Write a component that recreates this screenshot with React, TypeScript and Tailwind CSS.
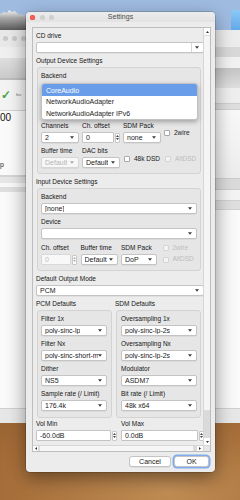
import React from 'react';

// Small down-pointing triangle used on every combo box.
const Caret = ({ muted = false }: { muted?: boolean }) => (
  <svg width="4" height="3" viewBox="0 0 4 3" className="shrink-0">
    <path d="M0 0.2h4L2 2.8z" fill={muted ? '#a8a8a8' : '#3b3b3b'} />
  </svg>
);

// A label that sits above a control.
const Label = ({ children, className = '' }: { children: React.ReactNode; className?: string }) => (
  <div className={`h-[8px] whitespace-nowrap text-[6.5px] leading-[8px] text-[#151515] ${className}`}>{children}</div>
);

interface ComboProps {
  text?: string;
  disabled?: boolean;
  editable?: boolean;
  className?: string;
}

const Combo: React.FC<ComboProps> = ({ text = '', disabled = false, editable = false, className = '' }) => (
  <div
    className={`flex h-[11px] shrink-0 items-center justify-between rounded-[2px] border pl-[3px] pr-[4px] text-[7px] leading-none shadow-[0_0.5px_0.5px_rgba(0,0,0,0.1)] ${
      disabled ? 'border-[#d6d6d6] bg-[#f7f7f7] text-[#b4b4b4]' : 'border-[#c4c4c4] bg-white text-[#1a1a1a]'
    } ${className}`}
  >
    <span className="overflow-hidden whitespace-nowrap">{text}</span>
    <div className="flex h-full items-center">
      {editable && <div className="mr-[3px] h-full w-px bg-[#d8d8d8]" />}
      <Caret muted={disabled} />
    </div>
  </div>
);

const Spin: React.FC<ComboProps> = ({ text = '', disabled = false, className = '' }) => (
  <div className={`flex h-[11px] shrink-0 items-center ${className}`}>
    <div
      className={`flex h-full flex-1 items-center overflow-hidden whitespace-nowrap rounded-[1px] border pl-[3px] text-[7px] leading-none ${
        disabled ? 'border-[#d8d8d8] bg-[#f8f8f8] text-[#c0c0c0]' : 'border-[#c4c4c4] bg-white text-[#1a1a1a]'
      }`}
    >
      {text}
    </div>
    <div className="ml-[1px] flex h-[10px] w-[5px] flex-col items-center justify-center gap-[1px] rounded-[1px] border border-[#c8c8c8] bg-white">
      <svg width="3" height="2" viewBox="0 0 3 2">
        <path d="M0 2h3L1.5 0z" fill={disabled ? '#b0b0b0' : '#444'} />
      </svg>
      <svg width="3" height="2" viewBox="0 0 3 2">
        <path d="M0 0h3L1.5 2z" fill={disabled ? '#b0b0b0' : '#444'} />
      </svg>
    </div>
  </div>
);

const Check = ({ label, disabled = false }: { label: string; disabled?: boolean }) => (
  <div className="flex items-center gap-[4px]">
    <span
      className={`h-[6px] w-[6px] shrink-0 rounded-[1px] border ${
        disabled ? 'border-[#d4d4d4] bg-[#f3f3f3]' : 'border-[#a8a8a8] bg-white'
      }`}
    />
    <span className={`whitespace-nowrap text-[6.5px] leading-none ${disabled ? 'text-[#bdbdbd]' : 'text-[#1a1a1a]'}`}>{label}</span>
  </div>
);

// Label + control stacked.
const Field = ({ label, children }: { label: string; children: React.ReactNode }) => (
  <div className="flex flex-col gap-[2px]">
    <Label>{label}</Label>
    {children}
  </div>
);

const groupBox = 'rounded-[3px] border border-[#d3d3d3] bg-[#e6e6e6]';

export default function App() {
  return (
    <div className="relative h-[500px] w-[240px] overflow-hidden bg-[#9fbbe0] font-['Liberation_Sans',Arial,sans-serif]">
      {/* DESKTOP: sky, mountain and the corner icon */}
      <svg className="absolute left-0 top-0" width="30" height="32" viewBox="0 0 30 32">
        <defs>
          <linearGradient id="mtn" x1="0" y1="0" x2="0" y2="1">
            <stop offset="0" stopColor="#f4f4f4" />
            <stop offset="0.35" stopColor="#a9a9a9" />
            <stop offset="1" stopColor="#4d4d4d" />
          </linearGradient>
        </defs>
        <path d="M0 14 L4 12 L7 13 L9 10 L12 12 L15 11 L18 14 L23 15 L30 17 L30 32 L0 32Z" fill="url(#mtn)" />
      </svg>
      <div className="absolute left-[231px] top-[10px] h-[22px] w-[12px] rounded-tl-[2px] bg-[linear-gradient(180deg,#8cc8f6,#5fa6e6)]" />

      {/* Left background window */}
      <div className="absolute left-0 top-[30px] flex h-[393px] w-[34px] flex-col bg-[#fafafa]">
        <div className="flex h-[17px] items-center gap-[4px] bg-[#e8e8e8] pl-[3px]">
          <span className="h-[5px] w-[5px] rounded-full bg-[#c9c9c9]" />
          <span className="h-[5px] w-[5px] rounded-full bg-[#c9c9c9]" />
          <span className="h-[5px] w-[5px] rounded-full bg-[#c9c9c9]" />
        </div>
        <div className="h-[11px] bg-[#efefef]" />
        <div className="h-[20px] bg-[linear-gradient(180deg,#dedede,#cacaca)]" />
        <div className="h-[2px] bg-[#bcbcbc]" />
        <div className="flex h-[30px] items-center gap-[5px] bg-[#f3f3f3] pl-[1px]">
          <span className="text-[12px] font-bold leading-none text-[#4aa23a]">✓</span>
          <span className="text-[4px] leading-none text-[#666]">Inv</span>
        </div>
        <div className="h-px bg-[#d2d2d2]" />
        <div className="pl-0 pt-[2px] text-[10px] leading-none text-[#111]">00</div>
        <div className="mt-[38px] text-[7px] leading-none text-[#222]">p</div>
        <div className="mt-[7px] h-[2px] bg-[#d4d4d4]" />
        <div className="h-[6px] bg-[#e6e6e6]" />
        <div className="h-[4px] bg-[#f8f8f8]" />
        <div className="h-[5px] bg-[#dedede]" />
        <div className="flex-1 bg-[linear-gradient(90deg,#fbfbfb,#efefef)]" />
        <div className="h-px bg-[#cfcfcf]" />
        <div className="h-[14px] bg-[#e7e7e7]" />
      </div>

      {/* Right background window */}
      <div className="absolute left-[210px] top-[30px] flex h-[393px] w-[30px] flex-col bg-[#fafafa]">
        <div className="h-[17px] bg-[#ececec]" />
        <div className="h-[10px] bg-[#d8d8d8]" />
        <div className="h-[11px] bg-[#f1f1f1]" />
        <div className="h-[20px] bg-[linear-gradient(180deg,#c4c4c4,#dedede)]" />
        <div className="h-[15px] bg-[#eeeeee]" />
        <div className="h-[7px] border-y border-[#cfcfcf] bg-[#dedede]" />
        <div className="h-[68px] bg-[linear-gradient(180deg,#f8f8f8,#ececec)]" />
        <div className="h-[12px] border-y border-[#cccccc] bg-[#dadada]" />
        <div className="h-[10px] bg-[#f3f3f3]" />
        <div className="h-[10px] border-y border-[#d0d0d0] bg-[#dedede]" />
        <div className="flex-1 bg-[linear-gradient(90deg,#eeeeee,#fbfbfb)]" />
        <div className="h-px bg-[#cfcfcf]" />
        <div className="h-[14px] bg-[#e7e7e7]" />
      </div>

      {/* Desk */}
      <div className="absolute bottom-0 left-0 h-[77px] w-[240px] bg-[radial-gradient(ellipse_at_70%_90%,#c08d55,#a8713c_60%,#9a6432)]" />

      {/* SETTINGS WINDOW */}
      <div className="absolute left-[26px] top-[12px] flex h-[460px] w-[189px] flex-col rounded-[4px] bg-[#ececec] shadow-[0_6px_18px_rgba(0,0,0,0.4),0_0_0_0.5px_rgba(0,0,0,0.3)]">
        {/* Title bar */}
        <div className="relative flex h-[10px] items-center rounded-t-[4px] bg-[linear-gradient(180deg,#ececec,#e2e2e2)]">
          <div className="flex items-center gap-[4.5px] pl-[4px]">
            <span className="h-[5px] w-[5px] rounded-full bg-[#fc5d55] shadow-[inset_0_0_0_0.5px_#de4a42]" />
            <span className="h-[5px] w-[5px] rounded-full bg-[#cfcfcf]" />
            <span className="h-[5px] w-[5px] rounded-full bg-[#cfcfcf]" />
          </div>
          <div className="absolute inset-x-0 top-[1px] text-center text-[7px] leading-[8px] text-[#4a4a4a]">Settings</div>
        </div>

        {/* Scroll area */}
        <div className="ml-[6px] mr-[4px] mt-[5px] flex h-[425px] flex-col border border-[#bdbdbd] bg-[#ececec]">
          <div className="flex min-h-0 flex-1">
            {/* Viewport */}
            <div className="h-full w-[170px] overflow-hidden">
              <div className="flex w-[180px] flex-col pl-[3px] pt-[4px]">
                <Field label="CD drive">
                  <Combo editable className="w-[168px]" />
                </Field>

                <Label className="mt-[4px]">Output Device Settings</Label>
                <div className={`relative mt-[2px] ml-px w-[164px] pb-[5px] pl-[3px] pr-[3px] pt-[4px] ${groupBox}`}>
                  <div className="flex flex-col gap-[4px]">
                    <Field label="Backend">
                      <Combo text="" className="invisible" />
                    </Field>
                    {/* Device row is hidden under the open popup */}
                    <div className="invisible">
                      <Field label="Device">
                        <Combo text="" />
                      </Field>
                    </div>
                    <div className="grid grid-cols-[38px_38px_38px_1fr] gap-x-[3px]">
                      <Field label="Channels">
                        <Combo text="2" />
                      </Field>
                      <Field label="Ch. offset">
                        <Spin text="0" />
                      </Field>
                      <Field label="SDM Pack">
                        <Combo text="none" />
                      </Field>
                      <div className="pt-[8px]">
                        <Check label="2wire" />
                      </div>
                    </div>
                    <div className="grid grid-cols-[38px_38px_38px_1fr] gap-x-[3px]">
                      <Field label="Buffer time">
                        <Combo text="Default" disabled />
                      </Field>
                      <Field label="DAC bits">
                        <Combo text="Default" />
                      </Field>
                      <div className="pl-px pt-[9px]">
                        <Check label="48k DSD" />
                      </div>
                      <div className="pl-px pt-[9px]">
                        <Check label="AltDSD" disabled />
                      </div>
                    </div>
                  </div>

                  {/* Open Backend popup */}
                  <div className="absolute left-[3px] top-[15px] flex w-[157px] flex-col overflow-hidden rounded-[3px] border border-[#c2c2c2] bg-white text-[7px] leading-none shadow-[0_2px_5px_rgba(0,0,0,0.3)]">
                    <div className="flex h-[12px] items-center bg-[#6a9de9] pl-[4px] text-white">CoreAudio</div>
                    <div className="flex h-[11.5px] items-center pl-[4px] text-[#1c1c1c]">NetworkAudioAdapter</div>
                    <div className="flex h-[11.5px] items-center pl-[4px] text-[#1c1c1c]">NetworkAudioAdapter IPv6</div>
                  </div>
                </div>

                <Label className="mt-[4px]">Input Device Settings</Label>
                <div className={`mt-[2px] ml-px w-[164px] pb-[5px] pl-[3px] pr-[3px] pt-[4px] ${groupBox}`}>
                  <div className="flex flex-col gap-[4px]">
                    <Field label="Backend">
                      <Combo text="[none]" />
                    </Field>
                    <Field label="Device">
                      <Combo text="" />
                    </Field>
                    <div className="mt-px grid grid-cols-[36px_37px_36px_1fr] gap-x-[3.5px]">
                      <Field label="Ch. offset">
                        <Spin text="0" disabled />
                      </Field>
                      <Field label="Buffer time">
                        <Combo text="Default" />
                      </Field>
                      <Field label="SDM Pack">
                        <Combo text="DoP" />
                      </Field>
                      <div className="ml-[2px] flex flex-col gap-[2px]">
                        <div className="flex h-[8px] items-center">
                          <Check label="2wire" disabled />
                        </div>
                        <div className="flex h-[11px] items-center">
                          <Check label="AltDSD" disabled />
                        </div>
                      </div>
                    </div>
                  </div>
                </div>

                <div className="mt-[4px]">
                  <Field label="Default Output Mode">
                    <Combo text="PCM" className="w-[168px]" />
                  </Field>
                </div>

                <div className="mt-[4px] grid grid-cols-[75px_85px] gap-x-[4px] pl-0">
                  <Label>PCM Defaults</Label>
                  <Label>SDM Defaults</Label>
                </div>
                <div className="mt-[2px] grid grid-cols-[75px_85px] gap-x-[4px] pl-px">
                  <div className={`flex flex-col gap-[4px] pb-[6px] pl-[3px] pr-[4px] pt-[4px] ${groupBox}`}>
                    <Field label="Filter 1x">
                      <Combo text="poly-sinc-lp" />
                    </Field>
                    <Field label="Filter Nx">
                      <Combo text="poly-sinc-short-m" />
                    </Field>
                    <Field label="Dither">
                      <Combo text="NS5" />
                    </Field>
                    <Field label="Sample rate (/ Limit)">
                      <Combo text="176.4k" />
                    </Field>
                  </div>
                  <div className={`flex flex-col gap-[4px] pb-[6px] pl-[4px] pr-[3px] pt-[4px] ${groupBox}`}>
                    <Field label="Oversampling 1x">
                      <Combo text="poly-sinc-lp-2s" />
                    </Field>
                    <Field label="Oversampling Nx">
                      <Combo text="poly-sinc-lp-2s" />
                    </Field>
                    <Field label="Modulator">
                      <Combo text="ASDM7" />
                    </Field>
                    <Field label="Bit rate (/ Limit)">
                      <Combo text="48k x64" />
                    </Field>
                  </div>
                </div>

                <div className="mt-[2px] grid grid-cols-[81px_83px] gap-x-[4px]">
                  <Field label="Vol Min">
                    <Spin text="-60.0dB" />
                  </Field>
                  <Field label="Vol Max">
                    <Spin text="0.0dB" />
                  </Field>
                </div>
              </div>
            </div>

            {/* Vertical scrollbar */}
            <div className="flex w-[7px] flex-col border-l border-[#d6d6d6] bg-[#f1f1f1]">
              <div className="flex h-[7px] items-center justify-center bg-white">
                <svg width="3" height="2" viewBox="0 0 3 2">
                  <path d="M0 2h3L1.5 0z" fill="#333" />
                </svg>
              </div>
              <div className="flex-1 border-y border-[#dcdcdc] bg-[#f5f5f5]" />
              <div className="h-[27px] bg-[#dadada]" />
              <div className="flex h-[7px] items-center justify-center bg-white">
                <svg width="3" height="2" viewBox="0 0 3 2">
                  <path d="M0 0h3L1.5 2z" fill="#333" />
                </svg>
              </div>
            </div>
          </div>

          {/* Horizontal scrollbar */}
          <div className="flex h-[6px] shrink-0 border-t border-[#d6d6d6] bg-[#dadada]">
            <div className="flex w-[5px] items-center justify-center bg-white">
              <svg width="2" height="3" viewBox="0 0 2 3">
                <path d="M2 0v3L0 1.5z" fill="#333" />
              </svg>
            </div>
            <div className="ml-px w-[155px] border-x border-[#dcdcdc] bg-[#f6f6f6]" />
            <div className="flex-1" />
            <div className="flex w-[6px] items-center justify-center bg-white">
              <svg width="2" height="3" viewBox="0 0 2 3">
                <path d="M0 0v3L2 1.5z" fill="#333" />
              </svg>
            </div>
            <div className="w-[7px] border-l border-[#d6d6d6] bg-[#e6e6e6]" />
          </div>
        </div>

        {/* Dialog buttons */}
        <div className="mt-[4px] flex h-[11px] justify-end gap-[3px] pr-[6px]">
          <button className="flex h-[11px] w-[42px] items-center justify-center rounded-[3px] border border-[#c4c4c4] bg-white text-[7px] leading-none text-[#1a1a1a] shadow-[0_0.5px_0.5px_rgba(0,0,0,0.12)]">
            Cancel
          </button>
          <button className="flex h-[11px] w-[35px] items-center justify-center rounded-[3px] border border-[#c4c4c4] bg-white text-[7px] leading-none text-[#1a1a1a] shadow-[0_0_0_1.5px_#80abec]">
            OK
          </button>
        </div>
      </div>
    </div>
  );
}
